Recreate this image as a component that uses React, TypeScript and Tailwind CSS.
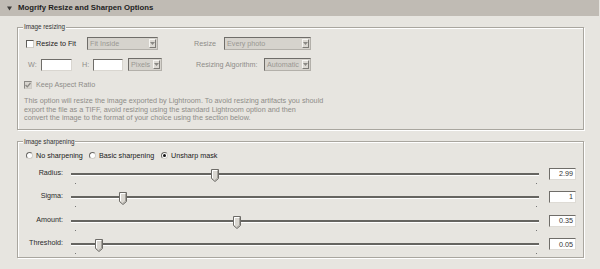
import React from "react";

const BG = "bg-[#e7e5e0]";

function Arrow() {
  return (
    <div className="ml-auto mr-[1px] flex h-[9px] w-[7px] items-center justify-center border border-t-[#f6f5f2] border-l-[#f6f5f2] border-r-[#7d7b76] border-b-[#7d7b76] bg-[#dcd9d3]">
      <svg width="5" height="3" viewBox="0 0 5 3">
        <path d="M0 0H5L2.5 3Z" fill="#8a8884" />
      </svg>
    </div>
  );
}

function Select({ label, w }: { label: string; w: string }) {
  return (
    <div
      className={`flex h-[13px] ${w} items-center border border-[#b3b0aa] border-t-[#6f6d69] border-l-[#6f6d69] bg-[#d6d3cd] pl-[2px]`}
    >
      <span className="whitespace-nowrap text-[7.2px] leading-none text-[#9a9893]">{label}</span>
      <Arrow />
    </div>
  );
}

function TextBox({ w }: { w: string }) {
  return (
    <div
      className={`h-[12px] ${w} border border-[#d9d6d0] border-t-[#6f6d69] border-l-[#6f6d69] bg-white`}
    />
  );
}

function Radio({ checked }: { checked?: boolean }) {
  return (
    <div className="flex h-[7px] w-[7px] items-center justify-center rounded-full border border-[#d0cdc7] border-t-[#6a6864] border-l-[#6a6864] bg-white">
      {checked ? <div className="h-[3px] w-[3px] rounded-full bg-[#111]" /> : null}
    </div>
  );
}

const sliders = [
  { label: "Radius:", pos: 140, value: "2.99" },
  { label: "Sigma:", pos: 48, value: "1" },
  { label: "Amount:", pos: 162, value: "0.35" },
  { label: "Threshold:", pos: 24, value: "0.05" },
];

function Thumb({ pos }: { pos: number }) {
  return (
    <svg
      className="absolute top-0"
      style={{ left: `${pos}px` }}
      width="8"
      height="13"
      viewBox="0 0 8 13"
    >
      <path d="M0.5 0.5H7.5V9.5L4 12.5L0.5 9.5Z" fill="#dad7d1" stroke="#6d6b67" strokeWidth="1" />
      <path d="M1.5 9V1.5H6.5" fill="none" stroke="#ffffff" strokeWidth="1" />
      <path d="M6.5 1.5V9.2L4 11.3" fill="none" stroke="#a3a09a" strokeWidth="1" />
    </svg>
  );
}

function SliderRow({ label, pos, value }: { label: string; pos: number; value: string }) {
  return (
    <div className="flex h-[23.6px] items-start">
      <div className="mt-[7px] w-[38px] whitespace-nowrap text-right text-[7.2px] leading-[10px] text-[#2a2a2a]">
        {label}
      </div>
      <div className="relative ml-[8px] mt-[8px] h-[15px] flex-1">
        <div className="mt-[4px] h-[2px] bg-[#666561] shadow-[0_1px_0_#ffffff]" />
        <div className="mt-[8px] flex justify-between pl-[4px] pr-[2px]">
          <span className="h-px w-px bg-[#777]" />
          <span className="h-px w-px bg-[#777]" />
        </div>
        <Thumb pos={pos} />
      </div>
      <div className="ml-[10px] mt-[7px] flex h-[12px] w-[27px] items-center justify-end border border-[#dedbd5] border-t-[#6f6d69] border-l-[#6f6d69] bg-white pr-[2px] text-[7.2px] leading-none text-[#333]">
        {value}
      </div>
    </div>
  );
}

export default function App() {
  return (
    <div className={`h-[269px] w-[600px] overflow-hidden ${BG} font-['Liberation_Sans',Arial,sans-serif]`}>
      {/* header */}
      <div className="flex h-[16px] w-[599px] items-center bg-[#c0bbb4] pl-[7px]">
        <svg width="5" height="5" viewBox="0 0 5 5">
          <path d="M0 0.5H5L2.5 4.5Z" fill="#3f3d3a" />
        </svg>
        <span className="ml-[6px] whitespace-nowrap text-[7.75px] font-bold leading-none text-[#1e1e1e]">
          Mogrify Resize and Sharpen Options
        </span>
      </div>

      <div className="h-[250px] pl-[17px]">
        {/* Image resizing */}
        <div className="relative mt-[11px] w-[567px] border border-[#a9a69f] pb-[6px] pl-[6px] pt-[9px] shadow-[inset_1px_1px_0_#ffffff,1px_1px_0_#ffffff]">
          <div className={`absolute left-[5px] top-[-5px] ${BG} px-[1px] text-[6.3px] leading-[8px] text-[#333]`}>
            Image resizing
          </div>

          {/* row 1 */}
          <div className="flex h-[13px] items-center">
            <div className="flex w-[63px] items-center pl-[2px]">
              <div className="h-[8px] w-[8px] border border-[#cfccc6] border-t-[#5f5d59] border-l-[#5f5d59] bg-white" />
              <span className="ml-[2px] whitespace-nowrap text-[7.2px] leading-none text-[#1a1a1a]">Resize to Fit</span>
            </div>
            <Select label="Fit Inside" w="w-[71px]" />
            <div className="ml-[36px] w-[30px] text-[7.2px] leading-none text-[#8e8c88]">Resize</div>
            <Select label="Every photo" w="w-[87px]" />
          </div>

          {/* row 2 */}
          <div className="mt-[8px] flex h-[13px] items-center">
            <div className="w-[17px] pl-[4px] text-[7.2px] leading-none text-[#8e8c88]">W:</div>
            <TextBox w="w-[31px]" />
            <div className="w-[21px] pl-[10px] text-[7.2px] leading-none text-[#8e8c88]">H:</div>
            <TextBox w="w-[30px]" />
            <div className="ml-[5px]">
              <Select label="Pixels" w="w-[34px]" />
            </div>
            <div className="w-[102px] whitespace-nowrap pl-[34px] text-[7.2px] leading-none text-[#8e8c88]">
              Resizing Algorithm:
            </div>
            <Select label="Automatic" w="w-[47px]" />
          </div>

          {/* row 3 */}
          <div className="mt-[9px] flex h-[10px] items-center">
            <div className="flex h-[8px] w-[8px] items-center justify-center border border-[#cfccc6] border-t-[#8a8884] border-l-[#8a8884] bg-[#d8d5cf]">
              <svg width="6" height="6" viewBox="0 0 6 6">
                <path d="M0.5 3L2.3 4.8L5.5 1" fill="none" stroke="#8a8884" strokeWidth="1.3" />
              </svg>
            </div>
            <span className="ml-[4px] whitespace-nowrap text-[7.2px] leading-none text-[#8e8c88]">Keep Aspect Ratio</span>
          </div>

          {/* paragraph */}
          <div className="mt-[7px] whitespace-nowrap text-[7.25px] leading-[8.5px] text-[#8e8c88]">
            This option will resize the image exported by Lightroom. To avoid resizing artifacts you should
            <br />
            export the file as a TIFF, avoid resizing using the standard Lightroom option and then
            <br />
            convert the image to the format of your choice using the section below.
          </div>
        </div>

        {/* Image sharpening */}
        <div className="relative mt-[11px] w-[567px] border border-[#a9a69f] pb-[2.6px] pl-[7px] pr-[7px] pt-[9px] shadow-[inset_1px_1px_0_#ffffff,1px_1px_0_#ffffff]">
          <div className={`absolute left-[5px] top-[-4px] ${BG} px-[1px] text-[6.3px] leading-[8px] text-[#333]`}>
            Image sharpening
          </div>

          <div className="flex h-[10px] items-center text-[7.2px] leading-none text-[#1a1a1a]">
            <div className="flex w-[64px] items-center pl-[1px]">
              <Radio />
              <span className="ml-[3px] whitespace-nowrap">No sharpening</span>
            </div>
            <div className="flex w-[72px] items-center">
              <Radio />
              <span className="ml-[3px] whitespace-nowrap">Basic sharpening</span>
            </div>
            <div className="flex items-center">
              <Radio checked />
              <span className="ml-[3px] whitespace-nowrap">Unsharp mask</span>
            </div>
          </div>

          {sliders.map((s) => (
            <SliderRow key={s.label} label={s.label} pos={s.pos} value={s.value} />
          ))}
        </div>
      </div>

      <div className="h-px w-full bg-[#bdbab4] shadow-[0_1px_0_#ffffff]" />
    </div>
  );
}
